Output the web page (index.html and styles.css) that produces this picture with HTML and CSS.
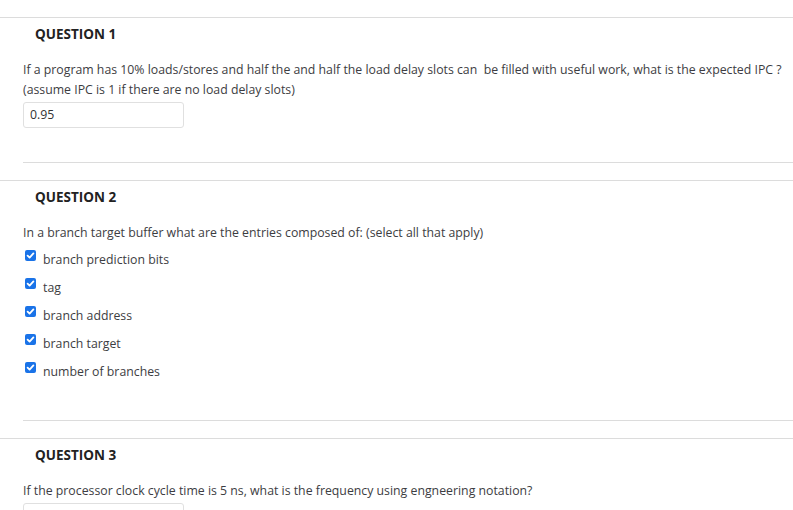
FILE: index.html
```html
<!DOCTYPE html>
<html>

	<head>
		<meta charset="UTF-8">
		<title>Quiz</title>
		<link rel="stylesheet" href="styles.css">
	</head>

	<body>
		<div class="quiz">
			<div class="question">
				<h3 class="qTitle">QUESTION 1</h3>
				<div class="qBody">
					<p class="qText">If a program has 10% loads/stores and half the and half the load delay slots can&nbsp; be filled with useful work, what is the expected IPC ?<br>(assume IPC is 1 if there are no load delay slots)</p>
					<div class="answerBox">0.95</div>
					<div class="sep"></div>
				</div>
			</div>

			<div class="question">
				<h3 class="qTitle">QUESTION 2</h3>
				<div class="qBody">
					<p class="qText">In a branch target buffer what are the entries composed of: (select all that apply)</p>
					<ul class="choices">
						<li><span class="check"><svg viewBox="0 0 11 11" width="11" height="11"><path d="M2.6 5.6 L4.6 7.6 L8.4 3.4" fill="none" stroke="#fff" stroke-width="1.8" stroke-linecap="round" stroke-linejoin="round"/></svg></span>branch prediction bits</li>
						<li><span class="check"><svg viewBox="0 0 11 11" width="11" height="11"><path d="M2.6 5.6 L4.6 7.6 L8.4 3.4" fill="none" stroke="#fff" stroke-width="1.8" stroke-linecap="round" stroke-linejoin="round"/></svg></span>tag</li>
						<li><span class="check"><svg viewBox="0 0 11 11" width="11" height="11"><path d="M2.6 5.6 L4.6 7.6 L8.4 3.4" fill="none" stroke="#fff" stroke-width="1.8" stroke-linecap="round" stroke-linejoin="round"/></svg></span>branch address</li>
						<li><span class="check"><svg viewBox="0 0 11 11" width="11" height="11"><path d="M2.6 5.6 L4.6 7.6 L8.4 3.4" fill="none" stroke="#fff" stroke-width="1.8" stroke-linecap="round" stroke-linejoin="round"/></svg></span>branch target</li>
						<li><span class="check"><svg viewBox="0 0 11 11" width="11" height="11"><path d="M2.6 5.6 L4.6 7.6 L8.4 3.4" fill="none" stroke="#fff" stroke-width="1.8" stroke-linecap="round" stroke-linejoin="round"/></svg></span>number of branches</li>
					</ul>
					<div class="sep"></div>
				</div>
			</div>

			<div class="question">
				<h3 class="qTitle">QUESTION 3</h3>
				<div class="qBody">
					<p class="qText">If the processor clock cycle time is 5 ns, what is the frequency using engneering notation?</p>
					<div class="answerBox"></div>
				</div>
			</div>
		</div>
	</body>

</html>
```

FILE: styles.css
```css
body {
	margin: 0;
	padding: 0;
	background: #fff;
	font-family: "Open Sans", "Liberation Sans", sans-serif;
	font-size: 12.3px;
	color: #3d3d42;
	overflow: hidden;
}

.quiz {
	padding-top: 17px;
}

.question {
	border-top: 1px solid #dcdcdc;
	margin-bottom: 17px;
}

.qTitle {
	margin: 0;
	padding: 7px 0 0 35px;
	font-size: 13.5px;
	line-height: 18px;
	font-weight: 700;
	color: #222;
}

.qBody {
	padding-left: 23px;
}

.qText {
	margin: 17px 0 0;
	line-height: 20px;
}

.answerBox {
	width: 147px;
	height: 24px;
	margin-top: 2px;
	padding: 0 6px;
	border: 1px solid #e0e0e0;
	border-radius: 3px;
	line-height: 24px;
	color: #333;
}

.sep {
	margin-top: 34px;
	border-top: 1px solid #dcdcdc;
}

.choices {
	list-style: none;
	margin: 3px 0 0;
	padding: 0;
}

.choices li {
	display: flex;
	align-items: center;
	height: 28px;
	line-height: 20px;
}

.check {
	display: flex;
	width: 11px;
	height: 11px;
	margin: 0 7px 0 2px;
	border-radius: 2px;
	background: #1a73e8;
	position: relative;
	top: -5px;
}
```
